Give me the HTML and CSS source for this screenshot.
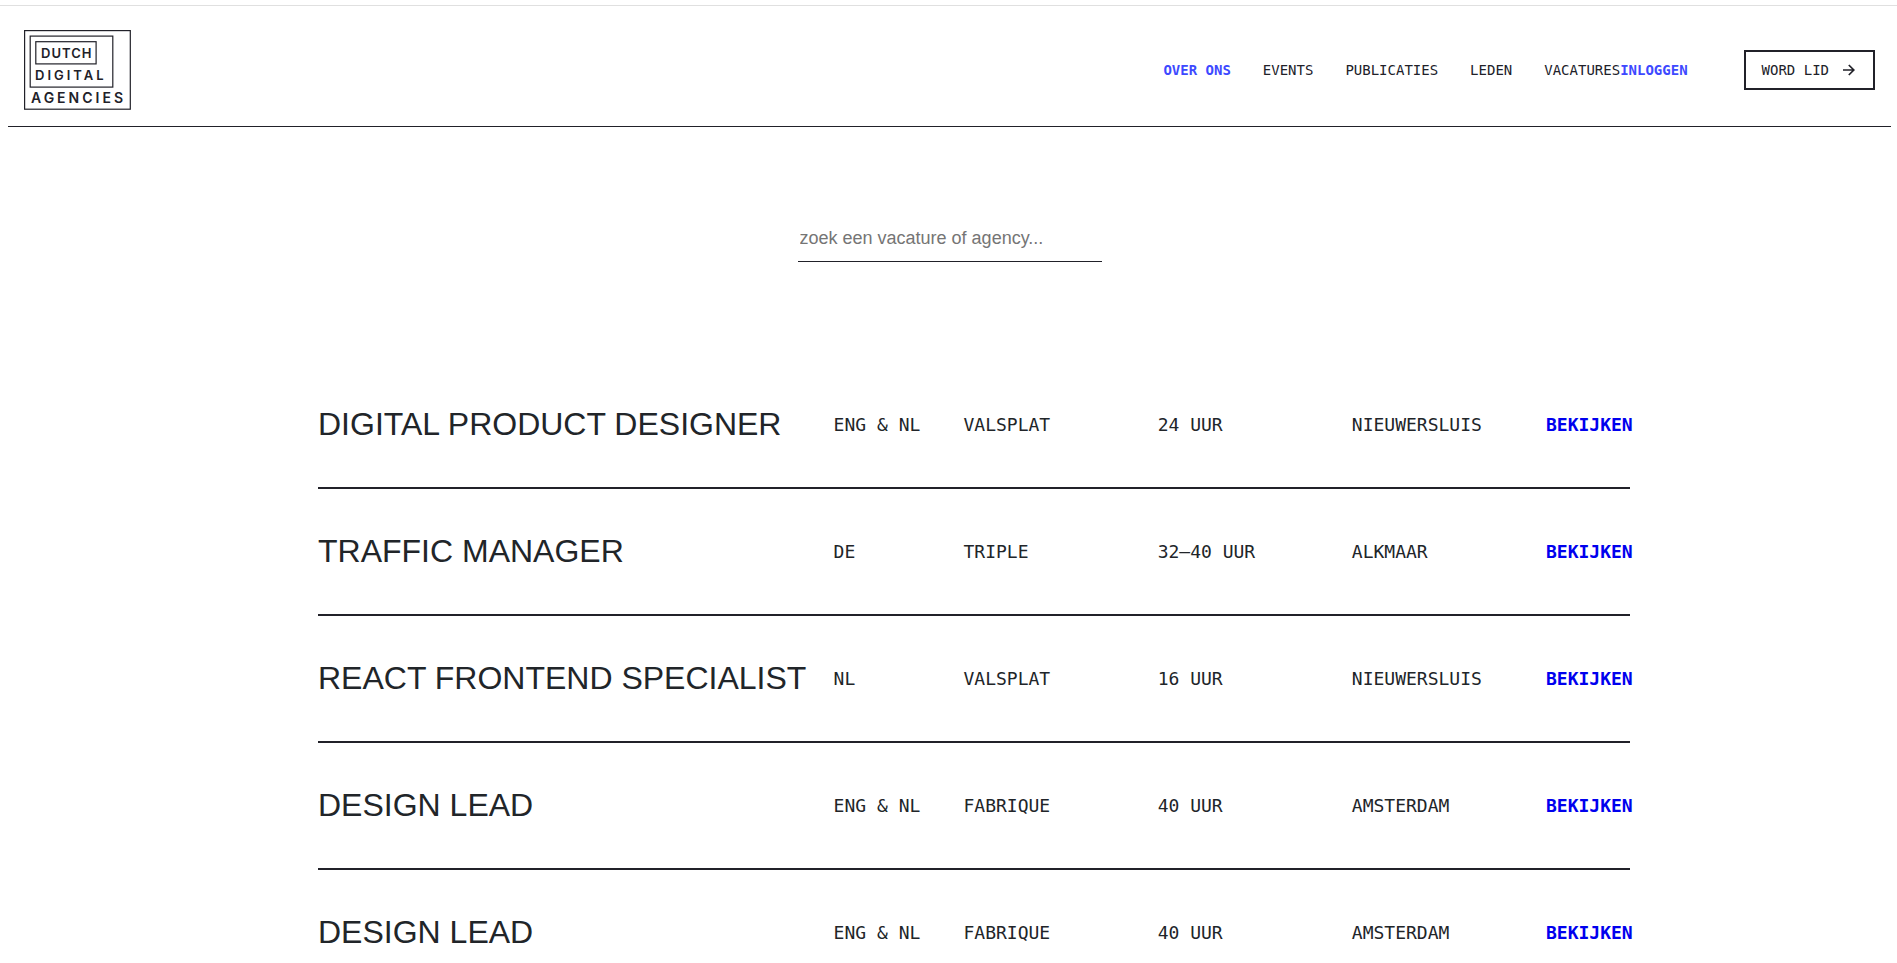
FILE: index.html
```html
<!DOCTYPE html>
<html lang="nl">
<head>
<meta charset="utf-8">
<title>Vacatures - Dutch Digital Agencies</title>
<link rel="stylesheet" href="styles.css">
</head>
<body>
<header class="header">
  <a class="logo" href="#" aria-label="Dutch Digital Agencies">
    <svg width="107" height="80" viewBox="0 0 107 80">
      <g class="logo-frames">
        <rect x="0.6" y="0.6" width="105.7" height="78.6"/>
        <rect x="6.2" y="6.1" width="82.6" height="51"/>
        <rect x="11.8" y="11.7" width="60.3" height="22.2"/>
      </g>
      <g class="logo-words">
        <text class="tight" x="17" y="28">DUTCH</text>
        <text x="11" y="50">DIGITAL</text>
        <text class="large" x="7" y="73">AGENCIES</text>
      </g>
    </svg>
  </a>
  <nav class="nav">
    <ul class="menu">
      <li><a class="accent" href="#">OVER ONS</a></li>
      <li><a href="#">EVENTS</a></li>
      <li><a href="#">PUBLICATIES</a></li>
      <li><a href="#">LEDEN</a></li>
      <li><a href="#">VACATURES</a></li>
    </ul>
    <a class="accent" href="#">INLOGGEN</a>
    <a class="join" href="#">WORD LID
      <svg width="12" height="12" viewBox="0 0 12 12" aria-hidden="true"><path d="M0 6H10.5M5.8 1L10.8 6L5.8 11"/></svg>
    </a>
  </nav>
</header>
<main>
  <form class="search">
    <input type="search" aria-label="Zoek een vacature of agency" placeholder="zoek een vacature of agency...">
  </form>
  <div class="vacancies">
    <table>
      <colgroup><col class="c-title"><col class="c-lang"><col class="c-info"><col class="c-info"><col class="c-info"><col></colgroup>
      <tbody>
        <tr><th scope="row">DIGITAL PRODUCT DESIGNER</th><td>ENG &amp; NL</td><td>VALSPLAT</td><td>24 UUR</td><td>NIEUWERSLUIS</td><td><a href="#">BEKIJKEN</a></td></tr>
        <tr><th scope="row">TRAFFIC MANAGER</th><td>DE</td><td>TRIPLE</td><td>32–40 UUR</td><td>ALKMAAR</td><td><a href="#">BEKIJKEN</a></td></tr>
        <tr><th scope="row">REACT FRONTEND SPECIALIST</th><td>NL</td><td>VALSPLAT</td><td>16 UUR</td><td>NIEUWERSLUIS</td><td><a href="#">BEKIJKEN</a></td></tr>
        <tr><th scope="row">DESIGN LEAD</th><td>ENG &amp; NL</td><td>FABRIQUE</td><td>40 UUR</td><td>AMSTERDAM</td><td><a href="#">BEKIJKEN</a></td></tr>
        <tr><th scope="row">DESIGN LEAD</th><td>ENG &amp; NL</td><td>FABRIQUE</td><td>40 UUR</td><td>AMSTERDAM</td><td><a href="#">BEKIJKEN</a></td></tr>
      </tbody>
    </table>
  </div>
</main>
</body>
</html>
```
FILE: styles.css
```css
* { box-sizing: border-box; }
html { scrollbar-width: none; }
body {
  margin: 0;
  padding-top: 5px;
  background: #fff;
  color: #212529;
  font-family: "Liberation Sans", Arial, sans-serif;
}
body::before {
  content: "";
  display: block;
  height: 1px;
  background: #e0e0e0;
}
a { text-decoration: none; }
.header {
  display: flex;
  align-items: center;
  justify-content: space-between;
  margin: 0 6px 0 8px;
  padding: 24px 16px 16px;
  border-bottom: 1px solid #212129;
}
.logo svg { display: block; }
.logo-frames rect { fill: none; stroke: #212129; stroke-width: 1.2; }
.logo-words text {
  fill: #212129;
  font: 600 13px Inter, sans-serif;
  letter-spacing: 3px;
}
.logo-words .tight { letter-spacing: 1px; }
.logo-words .large { font-size: 14px; }
.nav {
  display: flex;
  align-items: center;
  font-family: "DejaVu Sans Mono", "Liberation Mono", monospace;
  font-size: 14px;
  line-height: 20px;
}
.nav a { color: #212129; }
.nav .accent { color: #3d49ff; font-weight: 700; }
.menu {
  display: flex;
  gap: 32px;
  margin: 0;
  padding: 0;
  list-style: none;
}
.join {
  display: flex;
  align-items: center;
  gap: 14px;
  margin-left: 56px;
  padding: 8px 18px 8px 16px;
  border: 2px solid #212129;
}
.join svg { fill: none; stroke: #212129; stroke-width: 1.7; }
.search {
  display: flex;
  justify-content: center;
  margin: 0 6px 0 8px;
  padding: 88px 0 100px;
}
.search input {
  width: 304px;
  height: 47px;
  padding: 0 2px;
  border: 0;
  border-bottom: 1px solid #212129;
  background: none;
  color: #212529;
  font: 18px "Liberation Sans", Arial, sans-serif;
}
.search input::placeholder { color: #757575; opacity: 1; }
.vacancies { padding: 0 267px 0 318px; }
table {
  width: 100%;
  table-layout: fixed;
  border-spacing: 0;
}
.c-title { width: 39.3%; }
.c-lang { width: 9.9%; }
.c-info { width: 14.8%; }
th, td {
  height: 127px;
  padding: 0;
  border-bottom: 2px solid #212129;
  text-align: left;
  vertical-align: middle;
  white-space: nowrap;
}
th { font-size: 32px; font-weight: 400; }
td {
  font-family: "DejaVu Sans Mono", "Liberation Mono", monospace;
  font-size: 18px;
}
td a { color: #0000ee; font-weight: 700; }
```
